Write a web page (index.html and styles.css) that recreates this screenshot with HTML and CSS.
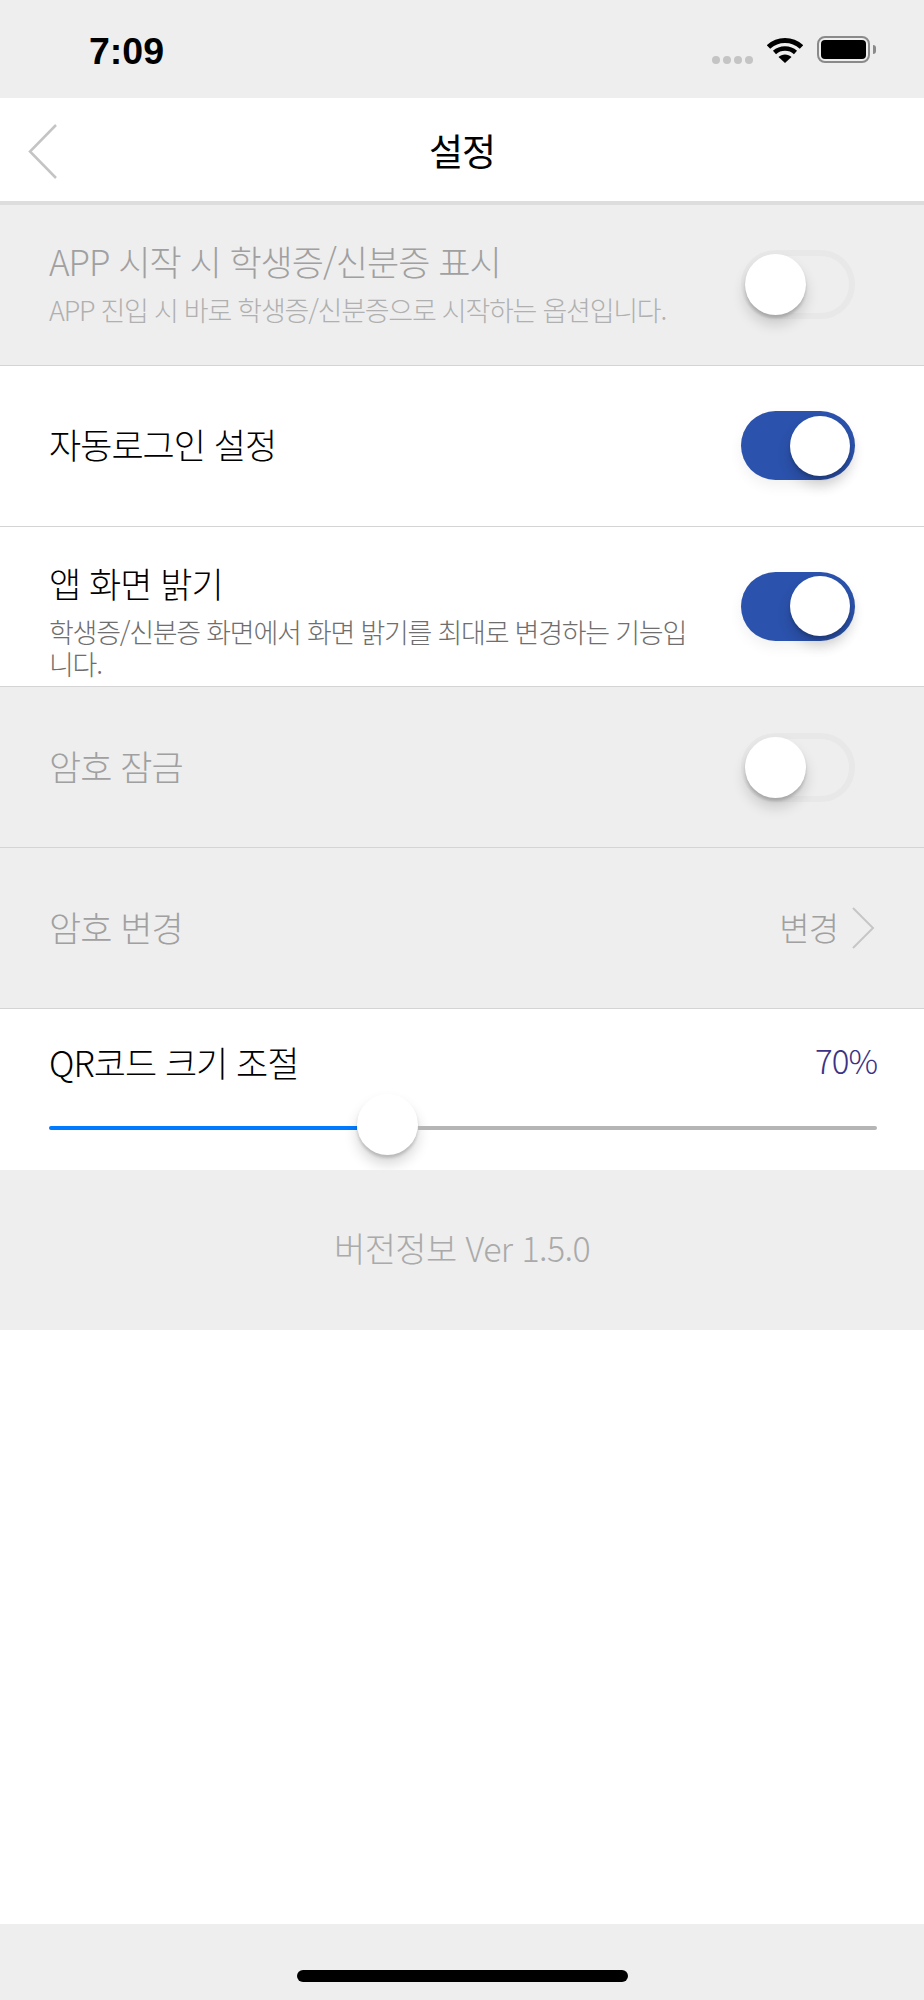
FILE: index.html
```html
<!DOCTYPE html>
<html lang="ko">
<head>
<meta charset="utf-8">
<title>설정</title>
<link rel="stylesheet" href="styles.css">
</head>
<body>
<div class="screen">
  <div class="statusbar">
    <span class="time">7:09</span>
    <div class="status-icons">
      <div class="dots"><i></i><i></i><i></i><i></i></div>
      <svg class="wifi" width="36" height="26" viewBox="0 0 36 26"><path d="M18 3.5C11.6 3.5 5.8 6 1.5 10" fill="none" stroke="#000" stroke-width="5"/><path d="M18 3.5C24.4 3.5 30.2 6 34.5 10" fill="none" stroke="#000" stroke-width="5"/><path d="M7.5 15.5C10.2 13 14 11.5 18 11.5S25.8 13 28.500 15.500" fill="none" stroke="#000" stroke-width="4.500"/><path d="M11.500 20 18 26 24.500 20C22.800 18.300 20.500 17.400 18 17.400S13.200 18.300 11.500 20Z" fill="#000"/></svg>
      <div class="battery"><div class="battery-fill"></div></div>
      <div class="battery-nub"></div>
    </div>
  </div>
  <header class="navbar">
    <svg class="back" width="30" height="56" viewBox="0 0 30 56"><path d="M28 1 2 27.500 28 54" fill="none" stroke="#c4c4c4" stroke-width="2.500"/></svg>
    <h1 class="nav-title">설정</h1>
  </header>
  <section class="row disabled">
    <div class="row-text stacked">
      <div class="row-title">APP 시작 시 학생증/신분증 표시</div>
      <div class="row-sub">APP 진입 시 바로 학생증/신분증으로 시작하는 옵션입니다.</div>
    </div>
    <div class="switch off"><div class="knob"></div></div>
  </section>
  <section class="row">
    <div class="row-text"><div class="row-title">자동로그인 설정</div></div>
    <div class="switch on"><div class="knob"></div></div>
  </section>
  <section class="row">
    <div class="row-text stacked">
      <div class="row-title">앱 화면 밝기</div>
      <div class="row-sub">학생증/신분증 화면에서 화면 밝기를 최대로 변경하는 기능입니다.</div>
    </div>
    <div class="switch on"><div class="knob"></div></div>
  </section>
  <section class="row disabled">
    <div class="row-text"><div class="row-title">암호 잠금</div></div>
    <div class="switch off"><div class="knob"></div></div>
  </section>
  <section class="row disabled link-row">
    <div class="row-text"><div class="row-title">암호 변경</div></div>
    <div class="link">
      <span class="link-label">변경</span>
      <svg width="23" height="42" viewBox="0 0 23 42"><path d="M1 1 21 21 1 41" fill="none" stroke="#c6c6c6" stroke-width="2"/></svg>
    </div>
  </section>
  <section class="slider-row">
    <div class="slider-head">
      <span class="row-title">QR코드 크기 조절</span>
      <span class="slider-value">70%</span>
    </div>
    <div class="slider">
      <div class="slider-fill" style="width:37.200%"></div>
      <div class="knob"></div>
      <div class="slider-rest"></div>
    </div>
  </section>
  <section class="version">버전정보 Ver 1.5.0</section>
  <div class="blank"></div>
  <div class="homebar"><div class="home-indicator"></div></div>
</div>
</body>
</html>
```
FILE: styles.css
```css
* { box-sizing: border-box; }
html, body { margin: 0; padding: 0; }
body {
  width: 924px;
  height: 2000px;
  overflow: hidden;
  background: #fff;
  font-family: "Noto Sans CJK KR", "Noto Sans", sans-serif;
  font-weight: 300;
  color: #000;
}
.screen { display: flex; flex-direction: column; height: 2000px; }

.statusbar {
  height: 98px;
  background: #eee;
  display: flex;
  justify-content: space-between;
  padding: 29px 48px 0 89px;
  flex-shrink: 0;
}
.time {
  font-family: "Liberation Sans", sans-serif;
  font-weight: 700;
  font-size: 37.500px;
  line-height: 44px;
  height: 44px;
}
.status-icons { display: flex; align-items: flex-start; padding-top: 7px; }
.dots { display: flex; gap: 3px; margin: 20px 14px 0 0; }
.dots i { width: 8px; height: 8px; border-radius: 50%; background: #c4c4c4; display: block; }
.wifi { margin-top: 1px; margin-right: 14px; }
.battery {
  width: 53px;
  height: 27px;
  border: 2.500px solid #8a8a8a;
  border-radius: 8px;
  padding: 2px;
}
.battery-fill { width: 100%; height: 100%; background: #000; border-radius: 4px; }
.battery-nub {
  width: 3px;
  height: 9px;
  margin: 9px 0 0 3px;
  background: #8a8a8a;
  border-radius: 0 3px 3px 0;
}

.navbar {
  height: 107px;
  background: #fff;
  border-bottom: 4px solid #ddd;
  display: flex;
  align-items: center;
  justify-content: center;
  position: relative;
  flex-shrink: 0;
}
.back { position: absolute; left: 28px; top: 26px; }
.nav-title { margin: 2px 0 0; font-size: 37px; font-weight: 400; line-height: 1.2; letter-spacing: -1px; }

.row {
  height: 160.800px;
  border-bottom: 1px solid #d4d4d4;
  background: #fff;
  display: flex;
  align-items: center;
  padding: 0 69px 0 49px;
  flex-shrink: 0;
}
.row.disabled { background: #eee; }
.row-text { width: 650px; padding-bottom: 3px; }
.row-text.stacked { align-self: flex-start; padding: 31px 0 0; }
.row-title { font-size: 35px; line-height: 50px; letter-spacing: -1px; color: #000; }
.row-sub { font-size: 27px; line-height: 32px; letter-spacing: -1.250px; color: #6e6e6e; margin-top: 8px; }
.disabled .row-title { color: #a0a0a0; }
.disabled .row-sub { color: #b0b0b0; }

.switch {
  margin-left: auto;
  width: 114px;
  height: 69px;
  border-radius: 35px;
  display: flex;
  align-items: center;
  flex-shrink: 0;
}
.switch.on { background: #2b52ac; justify-content: flex-end; padding-right: 5px; box-shadow: 0 6px 14px rgba(0, 0, 0, .06); }
.switch.off { border: 6px solid #e8e8e8; justify-content: flex-start; }
.knob {
  width: 61px;
  height: 61px;
  border-radius: 50%;
  background: #fff;
  flex-shrink: 0;
  box-shadow: 0 9px 14px rgba(0, 0, 0, .16), 0 3px 3px rgba(0, 0, 0, .16);
}
.switch.on .knob { width: 60px; height: 60px; }
.switch.off .knob { margin-left: -2px; }

.link-row { padding-right: 49px; }
.link { margin-left: auto; display: flex; align-items: center; gap: 14px; }
.link-label { font-size: 33px; letter-spacing: -1px; color: #a0a0a0; line-height: 42px; margin-bottom: 3px; }

.slider-row {
  height: 161px;
  background: #fff;
  padding: 28px 47px 0 49px;
  flex-shrink: 0;
}
.slider-head { display: flex; justify-content: space-between; align-items: flex-start; height: 50px; }
.slider-value { font-size: 33px; line-height: 46px; color: #3b3486; letter-spacing: -1px; }
.slider { display: flex; align-items: center; margin-top: 7px; height: 61px; }
.slider-fill { height: 4px; margin-top: 7px; background: #007aff; border-radius: 2px 0 0 2px; }
.slider-rest { flex: 1; height: 4px; margin-top: 7px; background: #b5b5b5; border-radius: 0 2px 2px 0; }

.version {
  height: 160px;
  background: #eee;
  display: flex;
  align-items: center;
  justify-content: center;
  padding-bottom: 4px;
  font-size: 34px;
  letter-spacing: -.6px;
  color: #aaa;
  flex-shrink: 0;
}
.blank { flex: 1; background: #fff; }
.homebar {
  height: 76px;
  background: #eee;
  display: flex;
  justify-content: center;
  padding-top: 46px;
  flex-shrink: 0;
}
.home-indicator { width: 331px; height: 12px; border-radius: 6px; background: #000; }
```
